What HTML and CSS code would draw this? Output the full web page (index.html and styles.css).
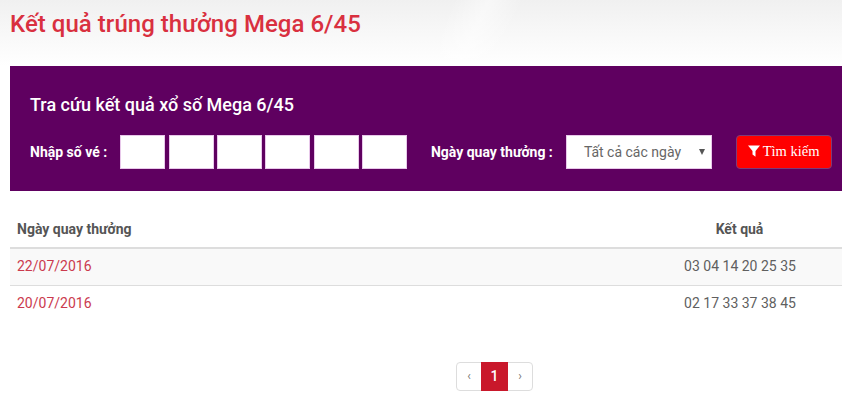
FILE: index.html
```html
<!DOCTYPE html>
<html lang="vi">
<head>
  <meta charset="UTF-8" />
  <meta name="viewport" content="width=device-width, initial-scale=1.0" />
  <title>Kết quả trúng thưởng Mega 6/45</title>
  <link rel="stylesheet" href="styles.css">
</head>

<body>
  <header class="page-head">
    <h1>Kết quả trúng thưởng Mega 6/45</h1>
  </header>

  <section class="search-box">
    <h2>Tra cứu kết quả xổ số Mega 6/45</h2>
    <form class="search-form">
      <label class="label-so">Nhập số vé :</label>
      <div class="so-list">
        <input type="text" class="so" />
        <input type="text" class="so" />
        <input type="text" class="so" />
        <input type="text" class="so" />
        <input type="text" class="so" />
        <input type="text" class="so" />
      </div>
      <label class="label-ngay">Ngày quay thưởng :</label>
      <div class="ngay-select">
        <span>Tất cả các ngày</span>
        <i class="caret"></i>
      </div>
      <button type="button" class="btn-search">
        <svg class="icon-filter" viewBox="0 0 12 12" width="12" height="12"><path d="M0 0.6h12L7.5 6v5.8L4.5 9.6V6z" fill="#fff"/></svg>
        Tìm kiếm
      </button>
    </form>
  </section>

  <table class="result-table">
    <thead>
      <tr>
        <th>Ngày quay thưởng</th>
        <th class="col-kq">Kết quả</th>
      </tr>
    </thead>
    <tbody>
      <tr class="odd">
        <td><a href="#">22/07/2016</a></td>
        <td class="col-kq">03 04 14 20 25 35</td>
      </tr>
      <tr>
        <td><a href="#">20/07/2016</a></td>
        <td class="col-kq">02 17 33 37 38 45</td>
      </tr>
    </tbody>
  </table>

  <nav class="pagination">
    <a href="#">‹</a>
    <a href="#" class="active">1</a>
    <a href="#">›</a>
  </nav>
</body>
</html>
```

FILE: styles.css
```css
body {
  margin: 0;
  background: #fff;
  color: #555;
  font-family: Roboto, Arial, sans-serif;
  font-size: 14px;
  height: 414px;
  overflow: hidden;
}

.page-head {
  height: 66px;
  box-sizing: border-box;
  padding: 10px 10px 0;
  background:
    linear-gradient(115deg, rgba(255,255,255,0) 52%, rgba(255,255,255,0.5) 56%, rgba(255,255,255,0) 60%),
    linear-gradient(to bottom, #f0f0f0 0%, #f7f7f7 45%, #fff 100%);
}

.page-head h1 {
  margin: 0;
  font-size: 24px;
  line-height: 28px;
  font-weight: 500;
  letter-spacing: 0.04px;
  color: #d9303f;
}

.search-box {
  margin-left: 10px;
  height: 125px;
  box-sizing: border-box;
  padding: 29px 10px 0 20px;
  background: #5f0060;
  color: #fff;
}

.search-box h2 {
  margin: 0 0 20px;
  font-size: 18px;
  line-height: 20px;
  font-weight: 500;
}

.search-form {
  display: flex;
  align-items: center;
  height: 34px;
}

.search-form label {
  font-size: 14px;
  font-weight: 700;
}

.label-so {
  width: 90.4px;
}

.so-list {
  display: flex;
  gap: 3.3px;
}

.so {
  width: 45px;
  height: 34px;
  box-sizing: border-box;
  padding: 0;
  background: #fff;
  border: 1px solid #e8c8ea;
}

.label-ngay {
  margin-left: 24px;
  width: 135px;
}

.ngay-select {
  position: relative;
  width: 146px;
  height: 34px;
  box-sizing: border-box;
  padding-left: 17px;
  background: #fff;
  border: 1px solid #e8c8ea;
  color: #666;
  font-size: 14px;
  line-height: 33px;
}

.caret {
  position: absolute;
  top: 13px;
  right: 6px;
  border-left: 3.5px solid transparent;
  border-right: 3.5px solid transparent;
  border-top: 6px solid #555;
}

.btn-search {
  margin-left: 24px;
  width: 96px;
  height: 34px;
  padding: 0 0 2px;
  background: #f00;
  border: 1px solid #7d3a78;
  border-radius: 4px;
  color: #fff;
  font-family: "Liberation Serif", "Times New Roman", serif;
  font-size: 14.5px;
  white-space: nowrap;
}

.icon-filter {
  vertical-align: -1px;
  margin-right: -1px;
}

.result-table {
  margin: 19px 0 0 10px;
  width: 832px;
  border-collapse: collapse;
  table-layout: fixed;
}

.result-table th {
  height: 37px;
  padding: 0 8px 0 7px;
  text-align: left;
  font-weight: 700;
  font-size: 14px;
  color: #555;
  border-bottom: 2px solid #ddd;
}

.result-table td {
  height: 37px;
  padding: 0 8px 1px 7px;
  box-sizing: border-box;
  border-bottom: 1px solid #ddd;
  font-size: 14px;
  color: #5f5f5f;
}

.result-table tbody tr:last-child td {
  height: 36px;
  padding-bottom: 0;
  border-bottom: 0;
}

.result-table .odd td {
  background: #f9f9f9;
}

.result-table th.col-kq {
  padding-right: 9px;
  padding-left: 8px;
  width: 187px;
  text-align: center;
}

.result-table td.col-kq {
  padding-left: 8px;
  text-align: center;
}

.result-table a {
  color: #cb3a4e;
  text-decoration: none;
}

.pagination {
  display: flex;
  justify-content: center;
  width: 77px;
  height: 29px;
  margin: 41px 0 0 456px;
  box-sizing: border-box;
  border: 1px solid #ddd;
  border-radius: 4px;
}

.pagination a {
  flex: 1;
  text-align: center;
  line-height: 27px;
  font-size: 12px;
  color: #777;
  text-decoration: none;
}

.pagination a.active {
  flex: 0 0 27px;
  margin: -1px 0;
  line-height: 29px;
  font-size: 14px;
  background: #c9182b;
  color: #fff;
  font-weight: 500;
}
```
